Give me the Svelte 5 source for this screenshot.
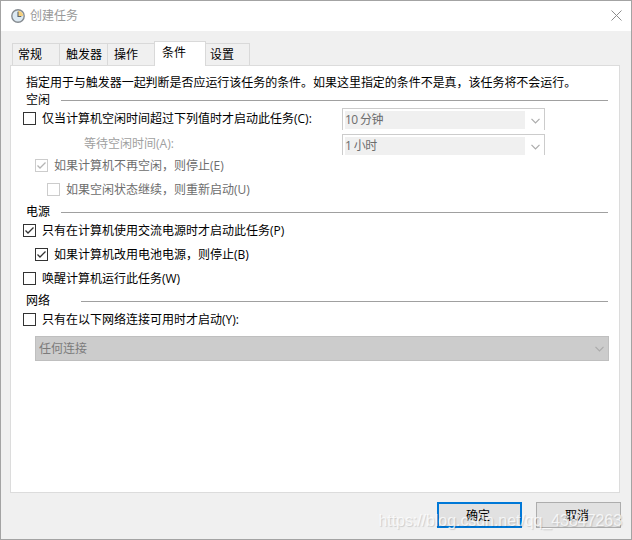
<script lang="ts">
  const tabs = [
    { name: '常规', width: 47 },
    { name: '触发器', width: 48 },
    { name: '操作', width: 47 },
    { name: '条件', width: 52 },
    { name: '设置', width: 44 }
  ];

  let active = $state('条件');
  let onAcPower = $state(true);
  let stopOnBattery = $state(true);
  let idleOnly = $state(false);
  let wake = $state(false);
  let network = $state(false);
</script>

{#snippet check(checked: boolean)}
  <svg class="box" viewBox="0 0 13 13">
    <rect x="0.5" y="0.5" width="12" height="12" />
    {#if checked}
      <path d="M2.5 6.5 L5 9 L10.5 3.5" />
    {/if}
  </svg>
{/snippet}

{#snippet chevron()}
  <svg class="chevron" viewBox="0 0 9 6">
    <path d="M0.5 0.8 L4.5 4.8 L8.5 0.8" />
  </svg>
{/snippet}

<div class="window">
  <header class="titlebar">
    <svg class="clock" viewBox="0 0 14 14">
      <circle cx="7" cy="7" r="6.2" fill="#dce9f2" stroke="#858b90" stroke-width="1.4" />
      <path d="M7 1.8 A5.2 5.2 0 0 1 12.2 7 L7 7 Z" fill="#f5cf7c" />
      <path d="M7 2.8 V7.5 H10.3" fill="none" stroke="#59646e" stroke-width="1.1" />
    </svg>
    <span class="title">创建任务</span>
    <svg class="close" viewBox="0 0 11 11">
      <path d="M0.5 0.5 L10.5 10.5 M10.5 0.5 L0.5 10.5" />
    </svg>
  </header>

  <nav class="tabs">
    {#each tabs as tab}
      <button
        class="tab"
        class:active={tab.name === active}
        style="width: {tab.width}px"
        onclick={() => (active = tab.name)}>{tab.name}</button
      >
    {/each}
  </nav>

  <main class="panel">
    <p class="intro">指定用于与触发器一起判断是否应运行该任务的条件。如果这里指定的条件不是真，该任务将不会运行。</p>

    <div class="group idle"><span>空闲</span><i></i></div>
    <div class="idle-row">
      <button class="option" onclick={() => (idleOnly = !idleOnly)}>
        {@render check(idleOnly)}仅当计算机空闲时间超过下列值时才启动此任务(C):
      </button>
      <div class="combo"><span>10 分钟</span>{@render chevron()}</div>
    </div>
    <div class="idle-row wait">
      <span class="wait-label">等待空闲时间(A):</span>
      <div class="combo"><span>1 小时</span>{@render chevron()}</div>
    </div>
    <button class="option stop disabled" disabled>{@render check(true)}如果计算机不再空闲，则停止(E)</button>
    <button class="option restart disabled" disabled>{@render check(false)}如果空闲状态继续，则重新启动(U)</button>

    <div class="group"><span>电源</span><i></i></div>
    <button class="option power" onclick={() => (onAcPower = !onAcPower)}>
      {@render check(onAcPower)}只有在计算机使用交流电源时才启动此任务(P)
    </button>
    <button class="option battery" onclick={() => (stopOnBattery = !stopOnBattery)}>
      {@render check(stopOnBattery)}如果计算机改用电池电源，则停止(B)
    </button>
    <button class="option" onclick={() => (wake = !wake)}>
      {@render check(wake)}唤醒计算机运行此任务(W)
    </button>

    <div class="group network"><span>网络</span><i></i></div>
    <button class="option connection" onclick={() => (network = !network)}>
      {@render check(network)}只有在以下网络连接可用时才启动(Y):
    </button>
    <div class="select">任何连接{@render chevron()}</div>
  </main>

  <footer class="actions">
    <button class="action default">确定</button>
    <button class="action">取消</button>
  </footer>
  <span class="watermark">https://blog.csdn.net/qq_43847263</span>
</div>

<style>
  :global(body) {
    margin: 0;
    overflow: hidden;
  }

  .window {
    position: relative;
    box-sizing: border-box;
    width: 632px;
    height: 540px;
    border: 1px solid #a3a3a3;
    background: #f0f0f0;
    color: #000;
    font: 12px/16px 'Open Sans', 'Noto Sans CJK SC', sans-serif;
    white-space: nowrap;
  }

  button {
    box-sizing: border-box;
    margin: 0;
    padding: 0;
    border: 0;
    background: none;
    color: inherit;
    font: inherit;
    white-space: nowrap;
  }

  .titlebar {
    display: flex;
    align-items: center;
    height: 30px;
    padding: 0 9px 0 10px;
    background: #fff;
  }

  .clock {
    width: 14px;
    height: 14px;
  }

  .title {
    margin-left: 5px;
    color: #999;
  }

  .close {
    width: 11px;
    height: 11px;
    margin: 0 0 1px auto;
    fill: none;
    stroke: #8c8c8c;
  }

  .tabs {
    display: flex;
    align-items: flex-end;
    height: 25px;
    margin: 9px 0 0 11px;
  }

  .tab {
    height: 22px;
    padding-left: 5px;
    border: 1px solid #d9d9d9;
    border-width: 1px 0 0 1px;
    text-align: left;
  }

  .tab:nth-child(2),
  .tab:nth-child(3) {
    padding-left: 6px;
  }

  .tab:last-child {
    padding-left: 4px;
    border-width: 1px 1px 0 0;
  }

  .tab.active {
    position: relative;
    height: 25px;
    margin-bottom: -1px;
    padding: 0 0 2px 7px;
    border-width: 1px 1px 0;
    background: #fff;
  }

  .panel {
    box-sizing: border-box;
    width: 610px;
    height: 428px;
    margin-left: 9px;
    padding: 8px 10px 0 12px;
    border: 1px solid #dcdcdc;
    background: #fff;
  }

  .intro {
    height: 18px;
    margin: 0 0 0 3px;
    letter-spacing: -0.04px;
    line-height: 18px;
  }

  .group {
    display: flex;
    align-items: center;
    height: 18px;
    margin-left: 3px;
  }

  .group.idle {
    height: 16px;
  }

  .group span {
    width: 35px;
  }

  .group i {
    flex: 1;
    height: 1px;
    margin-right: 1px;
    background: #a0a0a0;
  }

  .group.network {
    height: 22px;
  }

  .group.network span {
    width: 55px;
  }

  .option {
    display: flex;
    align-items: center;
    gap: 6px;
    height: 23px;
  }

  .option.power {
    height: 19px;
    margin-bottom: 2px;
  }

  .box {
    flex: none;
    width: 13px;
    height: 13px;
    fill: #fff;
    stroke: #333;
  }

  .box path {
    fill: none;
    stroke-width: 1.3;
  }

  .disabled {
    color: #6d6d6d;
  }

  .disabled .box {
    stroke: #ccc;
  }

  .disabled .box path {
    stroke: #b4b4b4;
  }

  .idle-row {
    display: flex;
    justify-content: space-between;
    height: 26px;
    padding-right: 64px;
  }

  .idle-row .option {
    height: 21px;
  }

  .idle-row.wait {
    height: 21px;
  }

  .wait-label {
    margin-left: 61px;
    color: #a0a0a0;
    line-height: 20px;
  }

  .combo {
    box-sizing: border-box;
    display: flex;
    align-items: flex-start;
    width: 203px;
    height: 22px;
    padding: 2px 4px 0 2px;
    border: 1px solid #ccc;
    border-bottom: 0;
    color: #6d6d6d;
    letter-spacing: -0.6px;
  }

  .wait .combo {
    height: 21px;
  }

  .combo span {
    width: 180px;
    height: 18px;
    background: #f0f0f0;
    line-height: 17px;
  }

  .chevron {
    width: 9px;
    height: 6px;
    fill: none;
    stroke: #ababab;
    stroke-width: 1.2;
  }

  .combo .chevron {
    margin: 7px 0 0 6px;
  }

  .stop {
    height: 21px;
    margin-left: 12px;
  }

  .restart {
    height: 27px;
    margin-left: 24px;
  }

  .battery {
    height: 25px;
    margin-left: 12px;
  }

  .connection {
    height: 15px;
  }

  .select {
    box-sizing: border-box;
    display: flex;
    align-items: center;
    justify-content: space-between;
    width: 574px;
    height: 25px;
    margin: 9px 0 0 12px;
    padding: 0 4px 0 3px;
    border: 1px solid #bfbfbf;
    background: #ccc;
    color: #7b7b7b;
  }

  .actions {
    display: flex;
    justify-content: flex-end;
    gap: 14px;
    padding: 9px 10px 0 0;
  }

  .action {
    width: 85px;
    height: 26px;
    padding: 1px 3px 0 0;
    border: 1px solid #adadad;
    background: #e1e1e1;
  }

  .action.default {
    border: 2px solid #0078d7;
  }

  .watermark {
    position: absolute;
    right: 9px;
    bottom: 9px;
    color: rgba(255, 255, 255, 0.75);
    font: 16px/18px 'Liberation Sans', sans-serif;
    letter-spacing: -0.06px;
    text-shadow: 1px 1px 1px rgba(0, 0, 0, 0.15);
    pointer-events: none;
  }
</style>
